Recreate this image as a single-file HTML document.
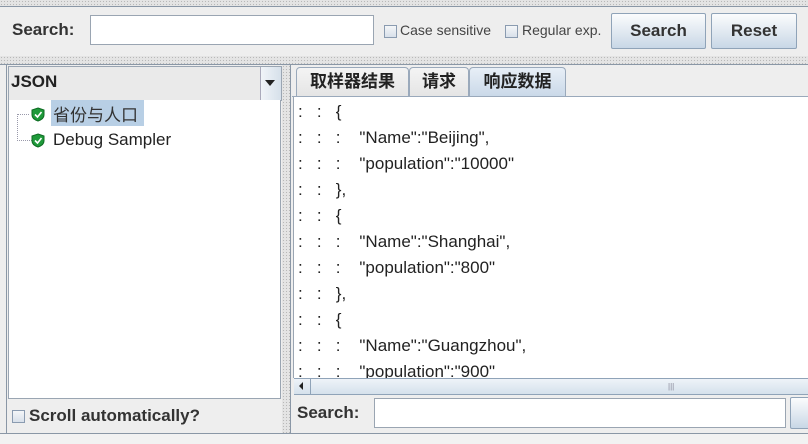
<!DOCTYPE html><html><head><meta charset="utf-8"><style>
body{margin:0;width:808px;height:444px;background:#eeeeee;position:relative;overflow:hidden;font-family:"Liberation Sans","Noto Sans CJK SC",sans-serif;}
.a{position:absolute}
.dot{background-color:#e4e4e4;background-image:radial-gradient(#b8b8b8 0.6px,transparent 0.8px);background-size:3px 3px}
.btn{position:absolute;border:1px solid #8fa3b8;border-radius:2px;background:linear-gradient(#fbfcfd,#dde6ef 60%,#c8d7e6);font-weight:bold;font-size:17px;color:#333;text-align:center}
.cb{position:absolute;width:11px;height:11px;border:1px solid #8a9bb0;background:linear-gradient(#f4f6f8,#d8e0ea)}
.ln{position:absolute;left:298px;font-size:17px;color:#222;white-space:pre}
.tab{position:absolute;top:67px;height:29px;border:1px solid #9aa9bb;border-bottom:none;border-radius:4px 4px 0 0;font-size:17px;font-weight:bold;line-height:27px;color:#222;text-align:center;background:linear-gradient(#f4f4f4,#e4e4e4)}
</style></head><body>
<div class="a dot" style="left:0;top:0;width:808px;height:6px"></div>
<div class="a" style="left:0;top:6px;width:808px;height:1px;background:#8a97a6"></div>
<div class="a" style="left:12px;top:20px;font-weight:bold;font-size:17px;color:#333">Search:</div>
<div class="a" style="left:90px;top:15px;width:282px;height:28px;background:#fff;border:1px solid #9aa5b2"></div>
<div class="cb" style="left:384px;top:25px"></div>
<div class="a" style="left:400px;top:22px;font-size:14px;color:#444">Case sensitive</div>
<div class="cb" style="left:505px;top:25px"></div>
<div class="a" style="left:522px;top:22px;font-size:14px;color:#444">Regular exp.</div>
<div class="btn" style="left:611px;top:13px;width:93px;height:34px;line-height:34px">Search</div>
<div class="btn" style="left:711px;top:13px;width:84px;height:34px;line-height:34px">Reset</div>
<div class="a dot" style="left:0;top:56px;width:808px;height:8px"></div>
<div class="a" style="left:0;top:64px;width:808px;height:1px;background:#8a97a6"></div>
<!-- left -->
<div class="a" style="left:6px;top:65px;width:1px;height:368px;background:#8a97a6"></div>
<div class="a" style="left:8px;top:66px;width:272px;height:33px;background:#eaeaea;border:1px solid #9aa5b2"></div>
<div class="a" style="left:11px;top:72px;font-weight:bold;font-size:17px;color:#222">JSON</div>
<div class="a" style="left:260px;top:67px;width:20px;height:33px;background:linear-gradient(90deg,#f0f4f8,#d6e0ea);border-left:1px solid #aab"></div>
<div class="a" style="left:265px;top:80px;width:0;height:0;border-left:5px solid transparent;border-right:5px solid transparent;border-top:6px solid #222"></div>
<div class="a" style="left:8px;top:100px;width:271px;height:298px;background:#fff;border:1px solid #9aa5b2;border-top:none"></div>
<div class="a" style="left:17px;top:114px;width:14px;height:26px;border-left:1px dotted #99a;border-bottom:1px dotted #99a"></div>
<div class="a" style="left:17px;top:114px;width:12px;border-top:1px dotted #99a"></div>
<svg class="a" style="left:31px;top:107px" width="14" height="15"><path d="M7 1L13 3V8C13 11 10 13 7 14C4 13 1 11 1 8V3Z" fill="#1f9a3a" stroke="#0d6b22"/><path d="M4 7.5L6.5 10L10.5 5" stroke="#fff" stroke-width="1.6" fill="none"/></svg>
<svg class="a" style="left:31px;top:133px" width="14" height="15"><path d="M7 1L13 3V8C13 11 10 13 7 14C4 13 1 11 1 8V3Z" fill="#1f9a3a" stroke="#0d6b22"/><path d="M4 7.5L6.5 10L10.5 5" stroke="#fff" stroke-width="1.6" fill="none"/></svg>
<div class="a" style="left:51px;top:100px;width:93px;height:26px;background:#b8cfe5"></div>
<div class="a" style="left:53px;top:101px;font-size:17px;color:#333">省份与人口</div>
<div class="a" style="left:53px;top:130px;font-size:17px;color:#222">Debug Sampler</div>
<div class="cb" style="left:12px;top:410px"></div>
<div class="a" style="left:29px;top:406px;font-weight:bold;font-size:17px;color:#333">Scroll automatically?</div>
<!-- divider -->
<div class="a dot" style="left:282px;top:65px;width:8px;height:368px"></div>
<div class="a" style="left:290px;top:65px;width:1px;height:368px;background:#8a97a6"></div>
<!-- tabs -->
<div class="tab" style="left:296px;width:111px">取样器结果</div>
<div class="tab" style="left:409px;width:58px">请求</div>
<div class="tab" style="left:469px;width:95px;background:linear-gradient(#e8eff7,#c9d8e8)">响应数据</div>
<div class="a" style="left:292px;top:96px;width:516px;height:1px;background:#9aa9bb"></div>
<div class="a" style="left:293px;top:97px;width:515px;height:281px;background:#fff;border-left:1px solid #9aa5b2"></div>
<div class="ln" style="top:102px">:   :   {</div>
<div class="ln" style="top:128px">:   :   :    "Name":"Beijing",</div>
<div class="ln" style="top:154px">:   :   :    "population":"10000"</div>
<div class="ln" style="top:180px">:   :   },</div>
<div class="ln" style="top:206px">:   :   {</div>
<div class="ln" style="top:232px">:   :   :    "Name":"Shanghai",</div>
<div class="ln" style="top:258px">:   :   :    "population":"800"</div>
<div class="ln" style="top:284px">:   :   },</div>
<div class="ln" style="top:310px">:   :   {</div>
<div class="ln" style="top:336px">:   :   :    "Name":"Guangzhou",</div>
<div class="ln" style="top:362px;height:16px;overflow:hidden">:   :   :    "population":"900"</div>
<div class="a" style="left:294px;top:378px;width:514px;height:15px;background:linear-gradient(#eef3f8,#d5e1ec);border-top:1px solid #8fa3b8;border-bottom:1px solid #8fa3b8"></div>
<div class="a" style="left:310px;top:378px;width:1px;height:16px;background:#8fa3b8"></div>
<div class="a" style="left:299px;top:382px;width:0;height:0;border-top:4px solid transparent;border-bottom:4px solid transparent;border-right:4px solid #222"></div>
<div class="a" style="left:668px;top:382px;font-size:8px;color:#889">|||</div>
<div class="a" style="left:297px;top:403px;font-weight:bold;font-size:17px;color:#333">Search:</div>
<div class="a" style="left:374px;top:398px;width:410px;height:28px;background:#fff;border:1px solid #9aa5b2"></div>
<div class="btn" style="left:790px;top:397px;width:30px;height:30px"></div>
<div class="a" style="left:0;top:433px;width:808px;height:1px;background:#8a97a6"></div>
<div class="a" style="left:0;top:434px;width:808px;height:10px;background:#f2f2f2"></div>
</body></html>
